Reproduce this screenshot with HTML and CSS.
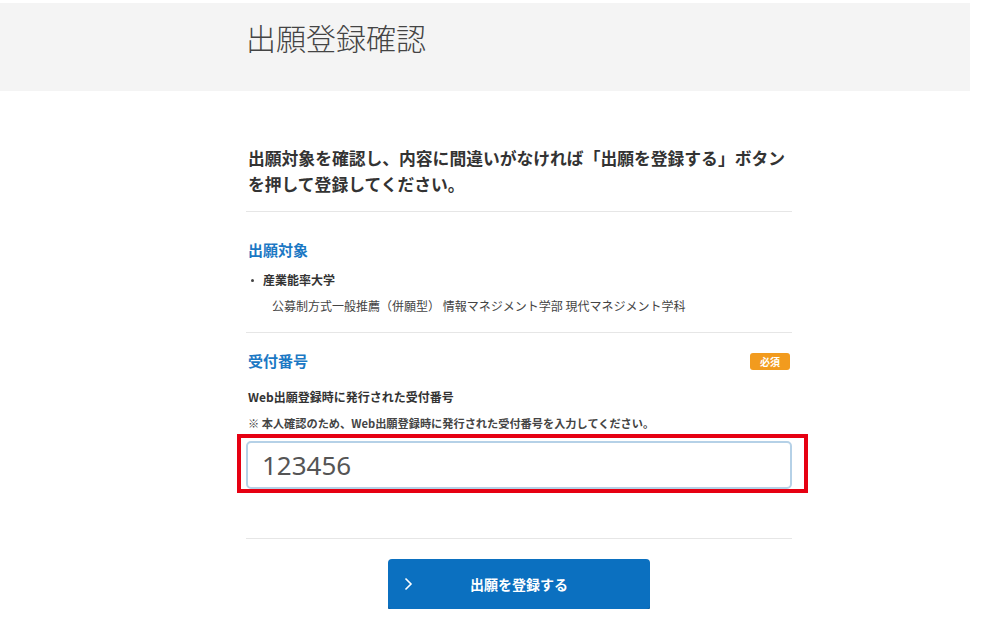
FILE: index.html
```html
<!DOCTYPE html>
<html lang="ja">
<head>
  <meta charset="UTF-8" />
  <meta name="viewport" content="width=device-width, initial-scale=1.0"/>
  <title>出願登録確認</title>
  <link rel="stylesheet" href="styles.css">
</head>
<body>

  <header class="page-head">
    <h1>出願登録確認</h1>
  </header>

  <main class="confirm">
    <p class="lead">出願対象を確認し、内容に間違いがなければ「出願を登録する」ボタンを押して登録してください。</p>

    <!-- 出願対象 -->
    <section class="block block-target">
      <h2>出願対象</h2>
      <ul class="target-list">
        <li>
          <span class="school">産業能率大学</span>
          <span class="course">公募制方式一般推薦（併願型） 情報マネジメント学部 現代マネジメント学科</span>
        </li>
      </ul>
    </section>

    <!-- 受付番号 -->
    <section class="block block-number">
      <div class="block-title">
        <h2>受付番号</h2>
        <span class="required">必須</span>
      </div>
      <label class="field-label" for="receipt-no">Web出願登録時に発行された受付番号</label>
      <p class="note">※ 本人確認のため、Web出願登録時に発行された受付番号を入力してください。</p>
      <div class="field-wrap">
        <input type="text" id="receipt-no" name="receipt-no" value="123456">
        <span class="highlight"></span>
      </div>
    </section>

    <div class="actions">
      <button type="submit" class="submit-btn">
        <svg class="chev" width="9" height="14" viewBox="0 0 9 14"><path d="M1.5 1.5 L7 7 L1.5 12.5" fill="none" stroke="#fff" stroke-width="1.6"/></svg>
        <span>出願を登録する</span>
      </button>
    </div>
  </main>

</body>
</html>
```

FILE: styles.css
```css
:root {
  --text-color: #333333;
  --accent-color: #1b78c4; /* headings */
  --button-color: #0b70c0;
  --badge-color: #f29b1e;
  --line-color: #e6e6e6;
}

body {
  margin: 0;
  padding: 3px 0 0;
  font-family: "Noto Sans CJK JP", "Noto Sans", sans-serif;
  background: #ffffff;
  color: var(--text-color);
}

.page-head {
  width: 970px;
  height: 88px;
  background: #f4f4f4;
  box-sizing: border-box;
  padding: 14px 0 0 246px;
}

.page-head h1 {
  margin: 0;
  font-size: 30px;
  font-weight: 300;
  line-height: 40px;
  color: #444;
}

.confirm {
  width: 546px;
  margin-left: 246px;
  padding-top: 54px;
}

.lead {
  margin: 0;
  padding: 0 4px 14px 2px;
  font-size: 16.8px;
  font-weight: bold;
  line-height: 26px;
  border-bottom: 1px solid var(--line-color);
}

.block {
  border-bottom: 1px solid var(--line-color);
  padding-left: 2px;
}

.block h2 {
  margin: 0;
  font-size: 15px;
  font-weight: bold;
  line-height: 22px;
  color: var(--accent-color);
}

.block-target {
  padding-top: 27px;
  padding-bottom: 16px;
}

.target-list {
  list-style: none;
  margin: 9px 0 0;
  padding: 0;
}

.target-list li {
  position: relative;
  padding-left: 15px;
  font-size: 12px;
}

.target-list li::before {
  content: "";
  position: absolute;
  left: 3px;
  top: 9px;
  width: 3px;
  height: 3px;
  border-radius: 50%;
  background: #444;
}

.school {
  display: block;
  font-weight: bold;
  line-height: 20px;
}

.course {
  display: block;
  margin: 6px 0 0 9px;
  line-height: 20px;
  color: #444;
}

.block-number {
  padding-top: 17px;
  padding-bottom: 49px;
}

.block-title {
  display: flex;
  justify-content: space-between;
  align-items: center;
}

.required {
  width: 40px;
  height: 17px;
  margin-right: 2px;
  border-radius: 3px;
  background: var(--badge-color);
  color: #fff;
  font-size: 10px;
  font-weight: bold;
  line-height: 17px;
  text-align: center;
}

.field-label {
  display: block;
  margin-top: 15px;
  font-size: 12px;
  font-weight: bold;
  line-height: 20px;
}

.note {
  margin: 8px 0 0;
  font-size: 11.2px;
  font-weight: bold;
  line-height: 16px;
  color: #444;
}

.field-wrap {
  position: relative;
  margin: 10px 0 0 -2px;
}

.field-wrap input {
  display: block;
  width: 100%;
  height: 48px;
  box-sizing: border-box;
  padding: 0 14px;
  border: 2px solid #b5d1e7;
  border-radius: 5px;
  font-family: "Noto Sans", sans-serif;
  font-size: 26px;
  color: #555;
  background: #fff;
  outline: none;
}

/* red annotation frame around the input */
.highlight {
  position: absolute;
  left: -9px;
  right: -16px;
  top: -7px;
  bottom: -4px;
  border: 4px solid #e60012;
  pointer-events: none;
}

.actions {
  display: flex;
  justify-content: center;
  padding-top: 20px;
}

.submit-btn {
  position: relative;
  width: 262px;
  height: 50px;
  border: none;
  border-radius: 4px;
  background: var(--button-color);
  box-shadow: 0 2px 0 #0a5b9c;
  color: #fff;
  font-family: "Noto Sans CJK JP", sans-serif;
  font-size: 14px;
  font-weight: bold;
  cursor: pointer;
}

.submit-btn .chev {
  position: absolute;
  left: 16px;
  top: 18px;
}
```
